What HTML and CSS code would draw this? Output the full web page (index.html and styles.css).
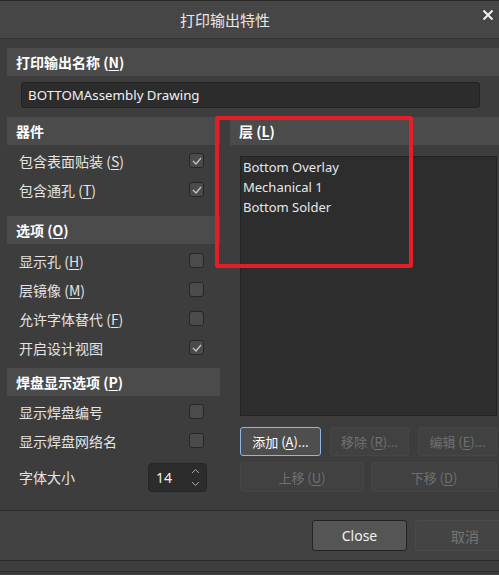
FILE: index.html
```html
<!DOCTYPE html>
<html>
<head>
<meta charset="utf-8">
<link rel="stylesheet" href="styles.css">
</head>
<body>
<div class="topline"></div>
<div class="titlebar">
  <span class="title">打印输出特性</span>
  <span class="close-x">
    <svg width="12" height="12" viewBox="0 0 12 12"><path d="M1.5 1.5L10.5 10.5M10.5 1.5L1.5 10.5" stroke="#f0f0f0" stroke-width="2"/></svg>
  </span>
</div>
<div class="content">
  <div class="sec-head">打印输出名称 (<u>N</u>)</div>
  <div class="name-wrap"><div class="name-input">BOTTOMAssembly Drawing</div></div>
  <div class="columns">
    <div class="left">
      <div class="sec-head">器件</div>
      <div class="group g1">
        <div class="row"><span>包含表面贴装 (<u>S</u>)</span><span class="cb on"><svg width="10" height="8" viewBox="0 0 10 8"><path d="M1 4l3 3 5-6" fill="none" stroke="#c8c8c8" stroke-width="1.2"/></svg></span></div>
        <div class="row"><span>包含通孔 (<u>T</u>)</span><span class="cb on"><svg width="10" height="8" viewBox="0 0 10 8"><path d="M1 4l3 3 5-6" fill="none" stroke="#c8c8c8" stroke-width="1.2"/></svg></span></div>
      </div>
      <div class="sec-head">选项 (<u>O</u>)</div>
      <div class="group g2">
        <div class="row"><span>显示孔 (<u>H</u>)</span><span class="cb"></span></div>
        <div class="row"><span>层镜像 (<u>M</u>)</span><span class="cb"></span></div>
        <div class="row"><span>允许字体替代 (<u>F</u>)</span><span class="cb"></span></div>
        <div class="row"><span>开启设计视图</span><span class="cb on"><svg width="10" height="8" viewBox="0 0 10 8"><path d="M1 4l3 3 5-6" fill="none" stroke="#c8c8c8" stroke-width="1.2"/></svg></span></div>
      </div>
      <div class="sec-head">焊盘显示选项 (<u>P</u>)</div>
      <div class="group g3">
        <div class="row"><span>显示焊盘编号</span><span class="cb"></span></div>
        <div class="row"><span>显示焊盘网络名</span><span class="cb"></span></div>
        <div class="row row-size"><span>字体大小</span>
          <span class="spin"><span class="spin-val">14</span>
            <span class="spin-arrows">
              <svg width="9" height="6" viewBox="0 0 9 6"><path d="M1 5l3.5-3.5L8 5" fill="none" stroke="#a8a8a8" stroke-width="1"/></svg>
              <svg width="9" height="6" viewBox="0 0 9 6"><path d="M1 1l3.5 3.5L8 1" fill="none" stroke="#a8a8a8" stroke-width="1"/></svg>
            </span>
          </span>
        </div>
      </div>
    </div>
    <div class="right">
      <div class="sec-head">层 (<u>L</u>)</div>
      <div class="layer-list">
        <div class="item">Bottom Overlay</div>
        <div class="item">Mechanical 1</div>
        <div class="item">Bottom Solder</div>
      </div>
      <div class="btn-row r1">
        <span class="btn primary w-add">添加 (<u>A</u>)...</span>
        <span class="btn dis w-rm">移除 (<u>R</u>)...</span>
        <span class="btn dis w-ed">编辑 (<u>E</u>)...</span>
      </div>
      <div class="btn-row r2">
        <span class="btn dis w-up">上移 (<u>U</u>)</span>
        <span class="btn dis w-dn">下移 (<u>D</u>)</span>
      </div>
    </div>
  </div>
  <div class="highlight"></div>
</div>
<div class="footer">
  <span class="fbtn close-btn">Close</span>
  <span class="fbtn cancel-btn">取消</span>
</div>
<div class="bottom-strip"></div>
</body>
</html>
```

FILE: styles.css
```css
html, body {
  margin: 0;
  padding: 0;
}
body {
  width: 499px;
  height: 575px;
  overflow: hidden;
  background: #3d3d3d;
  font-family: "Noto Sans", "Noto Sans CJK SC", sans-serif;
  font-size: 13px;
  color: #e6e6e6;
}
u {
  text-decoration: underline;
  text-underline-offset: 2px;
}
.topline {
  height: 1px;
  background: #2a2a2a;
}
.titlebar {
  height: 37px;
  background: #464646;
  border-bottom: 1px solid #333333;
  display: flex;
  align-items: center;
}
.title {
  margin-left: 180px;
  font-size: 15px;
  color: #e8e8e8;
  font-family: "Noto Sans CJK SC", sans-serif;
}
.close-x {
  margin-left: auto;
  margin-right: 5px;
  margin-top: -10px;
  display: flex;
}
.content {
  position: relative;
  padding: 9px 0 0 7px;
  height: 462px;
}
.sec-head {
  height: 28px;
  background: #4b4b4b;
  display: flex;
  align-items: center;
  padding-left: 9px;
  font-family: "Noto Sans CJK SC", sans-serif;
  font-weight: bold;
  font-size: 14px;
  color: #ffffff;
}
.name-wrap {
  padding: 6px 19px 0 14px;
}
.name-input {
  height: 26px;
  box-sizing: border-box;
  background: #2c2c2c;
  border: 1px solid #232323;
  border-radius: 3px;
  display: flex;
  align-items: center;
  padding-left: 6px;
  font-size: 13.3px;
  color: #f0f0f0;
}
.columns {
  display: flex;
  gap: 10px;
  margin-top: 9px;
}
.left {
  width: 213px;
  flex: none;
}
.right {
  width: 269px;
  flex: none;
}
.group.g1 { margin-top: 1px; margin-bottom: 12px; }
.group.g2 { margin-top: 2px; margin-bottom: 6px; }
.group.g3 { margin-top: 1px; }
.row {
  height: 29px;
  display: flex;
  align-items: center;
  justify-content: space-between;
  padding-left: 12px;
  padding-right: 16px;
  font-family: "Noto Sans CJK SC", sans-serif;
  font-size: 14px;
  color: #e4e4e4;
}
.row-size {
  height: 30px;
  margin-top: 7px;
  padding-right: 13px;
}
.cb {
  width: 15px;
  height: 15px;
  box-sizing: border-box;
  border: 1px solid #262626;
  background: #4b4b4b;
  border-radius: 3px;
  display: flex;
  align-items: center;
  justify-content: center;
}
.spin {
  width: 59px;
  height: 29px;
  box-sizing: border-box;
  background: #2c2c2c;
  border: 1px solid #262626;
  border-radius: 4px;
  display: flex;
  align-items: center;
  justify-content: space-between;
  padding: 0 6px 0 7px;
}
.spin-val {
  font-family: "Noto Sans", sans-serif;
  font-size: 14px;
  color: #f0f0f0;
}
.spin-arrows {
  display: flex;
  flex-direction: column;
  gap: 7px;
}
.spin-arrows svg { display: block; }
.layer-list {
  margin: 11px 0 0 10px;
  width: 257px;
  height: 260px;
  box-sizing: border-box;
  background: #2d2d2d;
  border: 1px solid #232323;
  padding: 0 0 0 2px;
}
.item {
  height: 20px;
  line-height: 20px;
  font-size: 13px;
  color: #e8e8e8;
}
.btn-row {
  display: flex;
  margin-left: 10px;
}
.btn-row.r1 { margin-top: 11px; gap: 9px; }
.btn-row.r2 { margin-top: 6px; gap: 7px; }
.btn {
  height: 29px;
  box-sizing: border-box;
  border-radius: 3px;
  display: flex;
  align-items: center;
  justify-content: center;
  font-family: "Noto Sans CJK SC", sans-serif;
  font-size: 13px;
}
.btn-row.r2 .btn { height: 30px; }
.btn.primary {
  background: #4e4e4e;
  border: 1px solid #8db6e4;
  color: #ffffff;
}
.btn.dis {
  background: #414141;
  border: 1px solid #464646;
  color: #707070;
}
.w-add { width: 81px; }
.w-rm { width: 79px; }
.w-ed { width: 79px; }
.w-up { width: 124px; }
.w-dn { width: 126px; }
.highlight {
  position: absolute;
  left: 215px;
  top: 77px;
  width: 198px;
  height: 152px;
  box-sizing: border-box;
  border: 4px solid #e51d27;
  border-radius: 3px;
}
.footer {
  height: 49px;
  background: #424242;
  border-top: 1px solid #2e2e2e;
  border-bottom: 1px solid #2a2a2a;
  display: flex;
  align-items: center;
  padding-left: 312px;
  gap: 8px;
}
.fbtn {
  height: 31px;
  box-sizing: border-box;
  border-radius: 3px;
  display: flex;
  align-items: center;
  justify-content: center;
  font-size: 14px;
  flex: none;
}
.close-btn {
  width: 95px;
  background: #555555;
  border: 1px solid #232323;
  color: #f2f2f2;
}
.cancel-btn {
  width: 100px;
  background: #444444;
  border: 1px solid #4a4a4a;
  color: #757575;
  font-family: "Noto Sans CJK SC", sans-serif;
}
.bottom-strip {
  height: 10px;
  background: #3e3e3e;
  border-bottom: 1px solid #2c2c2c;
}
```
